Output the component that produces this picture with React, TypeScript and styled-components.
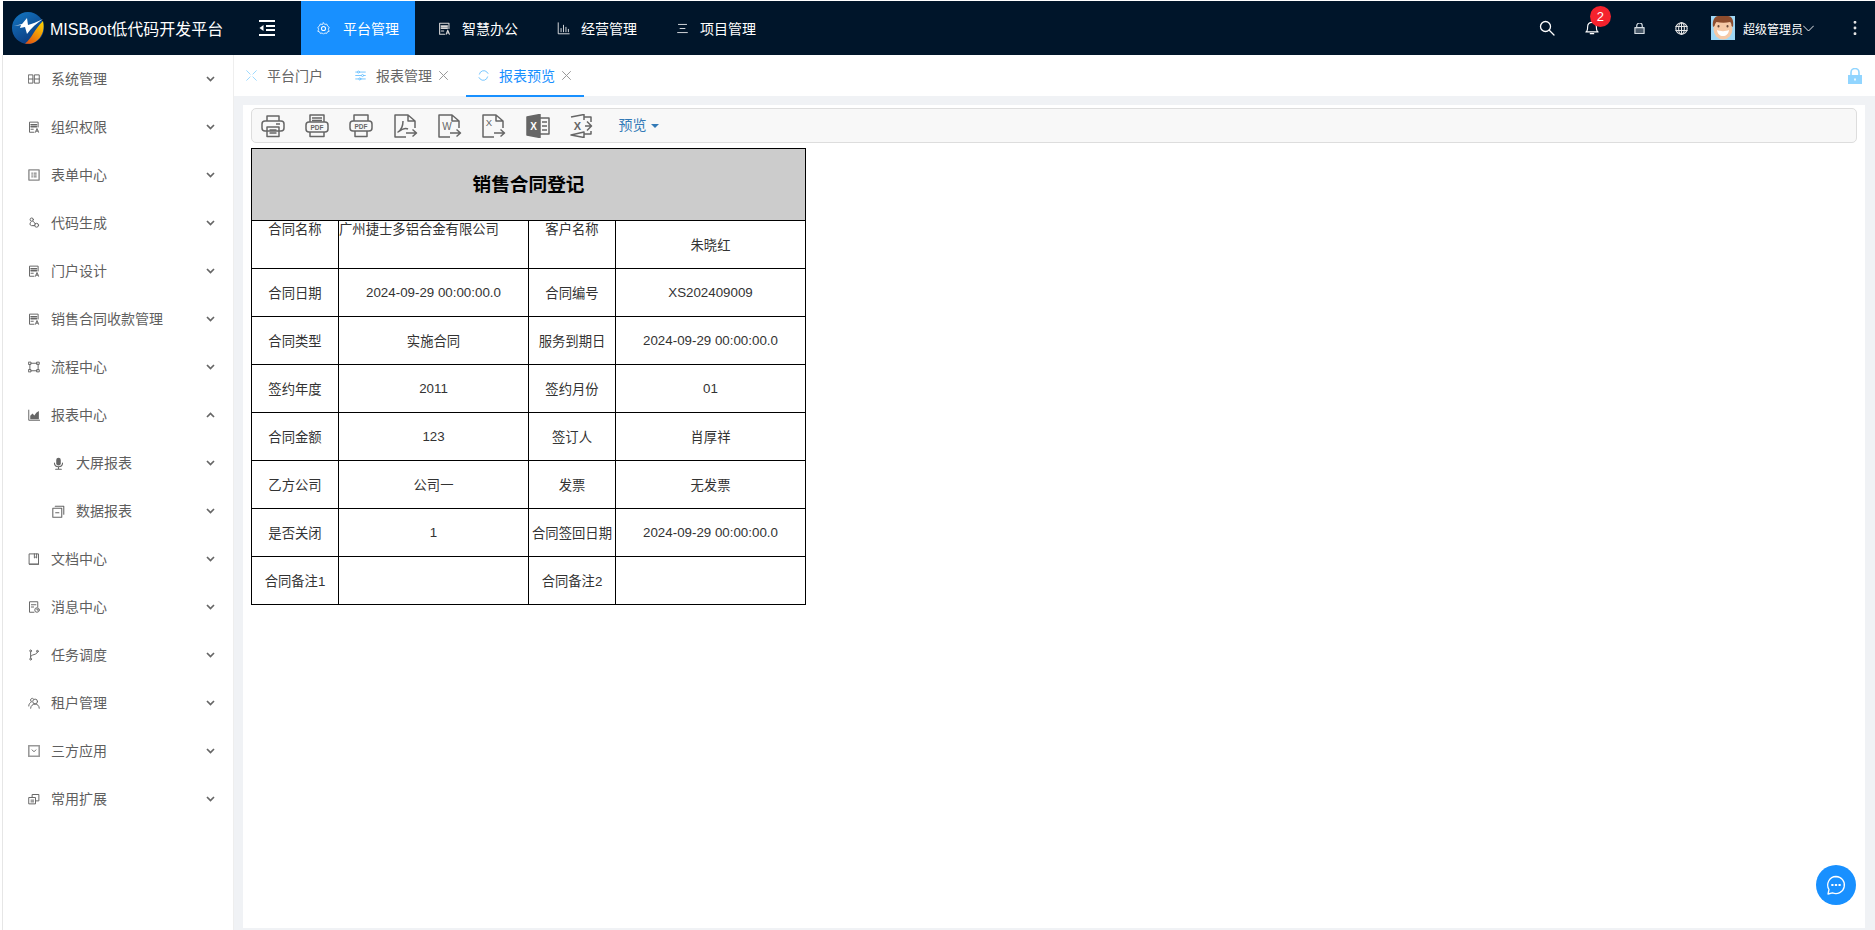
import type { ReactNode } from "react";
import styled, { createGlobalStyle } from "styled-components";

const FONT = `"Liberation Sans", "Noto Sans CJK SC", Arial, sans-serif`;

const GlobalStyle = createGlobalStyle`
  html, body {
    margin: 0;
    padding: 0;
    height: 100%;
    background: #fff;
    overflow: hidden;
  }
  * {
    box-sizing: border-box;
  }
  body {
    font-family: ${FONT};
  }
`;

const Page = styled.div`
  height: 930px;
  padding: 1px 0 0 2px;
  display: flex;
  flex-direction: column;
`;

const Header = styled.header`
  height: 54px;
  margin-left: 1px;
  flex-shrink: 0;
  background: #00152a;
  color: #fff;
  display: flex;
  align-items: center;
`;

const Brand = styled.div`
  display: flex;
  align-items: center;
  width: 255px;
  padding-left: 9px;
  font-size: 16px;
  gap: 6px;
  white-space: nowrap;
`;

const Toggle = styled.div`
  width: 43px;
  display: flex;
  align-items: center;
`;

const Nav = styled.nav`
  display: flex;
  height: 100%;
  gap: 5px;
`;

const NavItem = styled.a<{ $active?: boolean }>`
  width: 114px;
  padding-left: 16px;
  margin-right: ${(p) => (p.$active ? "2px" : "0")};
  display: flex;
  align-items: center;
  gap: ${(p) => (p.$active ? "13px" : "11px")};
  font-size: 14px;
  color: #fff;
  background: ${(p) => (p.$active ? "#1890ff" : "transparent")};
`;

const HeaderRight = styled.div`
  margin-left: auto;
  padding-right: 5px;
  height: 100%;
  display: flex;
  align-items: center;
  position: relative;
`;

const HeaderIcon = styled.span<{ $w: number }>`
  width: ${(p) => p.$w}px;
  display: flex;
  position: relative;
`;

const Badge = styled.span`
  position: absolute;
  left: 5px;
  top: -15px;
  width: 21px;
  height: 21px;
  border-radius: 50%;
  background: #f5222d;
  color: #fff;
  font-size: 13px;
  display: flex;
  align-items: center;
  justify-content: center;
`;

const UserName = styled.span`
  font-size: 12px;
  margin-left: 8px;
  white-space: nowrap;
`;

const Body = styled.div`
  flex: 1;
  min-height: 0;
  display: flex;
  border-left: 1px solid #e6e6e6;
`;

const Sidebar = styled.aside`
  width: 231px;
  flex-shrink: 0;
  background: #fff;
  border-right: 1px solid #eeeeee;
`;

const MenuRow = styled.div<{ $sub?: boolean }>`
  height: 48px;
  display: flex;
  align-items: center;
  padding-left: ${(p) => (p.$sub ? "49px" : "25px")};
  padding-right: 18px;
  font-size: 14px;
  color: #5f5f5f;
  gap: 11px;
`;

const MenuLabel = styled.span`
  flex: 1;
  padding-bottom: 2px;
`;

const Main = styled.main`
  flex: 1;
  min-width: 0;
  display: flex;
  flex-direction: column;
  background: #f0f2f5;
`;

const TabBar = styled.div`
  height: 41px;
  flex-shrink: 0;
  background: #fff;
  display: flex;
  gap: 5px;
`;

const Tab = styled.div<{ $active?: boolean }>`
  height: 42px;
  padding: 0 12px;
  display: flex;
  align-items: center;
  gap: 10px;
  font-size: 14px;
  color: ${(p) => (p.$active ? "#1890ff" : "#666")};
  border-bottom: 2px solid ${(p) => (p.$active ? "#1890ff" : "transparent")};
  position: relative;
  &:first-child {
    margin-right: 3px;
  }
`;

const TabClose = styled.span`
  margin-left: -4px;
  display: flex;
`;

const TabLock = styled.div`
  margin-left: auto;
  padding-right: 12px;
  display: flex;
  align-items: center;
`;

const Panel = styled.section`
  flex: 1;
  min-height: 0;
  margin: 9px 10px 2px 9px;
  padding: 3px 8px;
  background: #fff;
`;

const Toolbar = styled.div`
  height: 35px;
  border: 1px solid #dddddd;
  border-radius: 5px;
  background: #f8f8f8;
  display: flex;
  align-items: center;
  padding-left: 9px;
  gap: 20.2px;
`;

const PreviewMenu = styled.span`
  margin-left: 4px;
  padding-bottom: 3px;
  color: #337ab7;
  font-size: 14px;
  display: flex;
  align-items: center;
  gap: 4px;
`;

const Caret = styled.i`
  width: 0;
  height: 0;
  margin-top: 3px;
  border-left: 4px solid transparent;
  border-right: 4px solid transparent;
  border-top: 4px solid #337ab7;
`;

const ReportTable = styled.table`
  margin-top: 5px;
  width: 554px;
  table-layout: fixed;
  border-collapse: collapse;
  font-size: 13.33px;
  color: #333;
`;

const TitleCell = styled.td`
  height: 72px;
  padding-bottom: 5px;
  border: 1px solid #000;
  background: #cccccc;
  text-align: center;
  font-size: 18.67px;
  font-weight: bold;
  color: #000;
`;

const Cell = styled.td<{ $top?: boolean; $left?: boolean }>`
  height: 48px;
  border: 1px solid #000;
  padding: 0;
  line-height: ${(p) => (p.$top ? "18px" : "normal")};
  text-align: ${(p) => (p.$left ? "left" : "center")};
  vertical-align: ${(p) => (p.$top ? "top" : "middle")};
  white-space: nowrap;
  overflow: hidden;
`;

const ChatButton = styled.div`
  position: fixed;
  left: 1816px;
  top: 865px;
  width: 40px;
  height: 40px;
  border-radius: 50%;
  background: #1890ff;
  display: flex;
  align-items: center;
  justify-content: center;
`;

const Svg = styled.svg<{ $color?: string }>`
  display: block;
  flex-shrink: 0;
  color: ${(p) => p.$color ?? "#666"};
`;

function Icon({ size = 13, color, children, box = 16 }: { size?: number; color?: string; children: ReactNode; box?: number }) {
  return (
    <Svg
      $color={color}
      width={size}
      height={size}
      viewBox={`0 0 ${box} ${box}`}
      fill="none"
      stroke="currentColor"
      strokeWidth={1.3}
      strokeLinecap="round"
      strokeLinejoin="round"
    >
      {children}
    </Svg>
  );
}

const docA = (
  <>
    <path d="M8 15H2V1.500h11.500V8" />
    <path d="M4 5h7.500M4 7.500h7.500" strokeWidth={2} />
    <path d="M4 11h3M10 15l2-5 2 5M10.800 13.500h2.600" />
  </>
);

const menuIcons: Record<string, ReactNode> = {
  bento: (
    <>
      <rect x="1" y="2.500" width="5.500" height="11" />
      <rect x="9" y="2.500" width="6" height="11" />
      <path d="M1 8h5.500M9 8h6" />
    </>
  ),
  docA,
  form: (
    <>
      <rect x="1.200" y="1.200" width="13.600" height="13.600" strokeWidth={1.800} stroke="#888" />
      <path d="M5 5.500h1M8 5.500h3M5 8h1M8 8h3M5 10.500h1M8 10.500h3" />
    </>
  ),
  link: (
    <>
      <circle cx="5" cy="3.500" r="2.200" />
      <path d="M6.500 5.500 9 8M4 6.500C2 8 2 11 4.500 11.500H7" />
      <circle cx="11.500" cy="11" r="2.600" />
      <path d="M9 9h1M7 11.500h2" />
    </>
  ),
  flow: (
    <>
      <rect x="1" y="1.500" width="3" height="3" />
      <rect x="12" y="1.500" width="3" height="3" />
      <rect x="1" y="11.500" width="3" height="3" />
      <rect x="12" y="11.500" width="3" height="3" />
      <path d="M4 3h8M4 13h8M2.500 4.500v7M13.500 4.500v7" />
    </>
  ),
  chart: (
    <>
      <path d="M1 1.500V15h14.500" />
      <path d="M3 13.500V9l3-3 2.500 2.500L11 5l3.500-2.500v11z" fill="currentColor" stroke="none" />
    </>
  ),
  mic: (
    <>
      <rect x="5.200" y="1" width="5.600" height="9.500" rx="2.800" fill="currentColor" stroke="none" />
      <path d="M3 7.500c0 6 10 6 10 0M8 13v2M4.500 15h7" />
    </>
  ),
  copy: (
    <>
      <rect x="1" y="4" width="11" height="11" />
      <path d="M4 1.500h10.500v10M4.500 9.500h4" />
    </>
  ),
  book: (
    <>
      <path d="M2 1.200h12v13.600H2z" />
      <path d="M8.500 1.200v5.500l1.500-1.200 1.500 1.200V1.200" />
      <path d="M2 15h12" strokeWidth={1.600} />
    </>
  ),
  msg: (
    <>
      <path d="M8 15H2V1h11v7" />
      <path d="M4.500 5h6M4.500 8h3" />
      <circle cx="12" cy="12" r="3" />
      <path d="M12 10.500V12h1" />
    </>
  ),
  branch: (
    <>
      <circle cx="3.500" cy="2.500" r="1.200" />
      <circle cx="3.500" cy="13.500" r="1.200" />
      <circle cx="12.500" cy="3" r="1.200" />
      <path d="M3.500 4v8M3.500 10c0-3 9-2 9-5.500" />
    </>
  ),
  users: (
    <>
      <circle cx="9.500" cy="6" r="3.200" />
      <path d="M3.500 15c0-3.500 3-5.500 6-5.500s5.500 2 5.500 5.500" />
      <path d="M7 2.200C5.500 1 3.500 2 3.500 4c0 1.200.5 2 1.300 2.500C2.500 7.500 1 9.500 1 12" />
    </>
  ),
  select: (
    <>
      <rect x="1" y="1" width="14" height="14" strokeWidth={2.200} stroke="#999" />
      <path d="M5.500 6.500 8 9l2.500-2.500" />
    </>
  ),
  expand: (
    <>
      <rect x="1.500" y="6" width="8.500" height="8.500" />
      <path d="M5.500 6V2h9v8.500H10M4 9.500h3.500M4 11.800h3.500" />
    </>
  ),
};

const Chevron = ({ up }: { up?: boolean }) => (
  <Svg width="9" height="6" viewBox="0 0 9 6" fill="none" stroke="#666" strokeWidth={1.700}>
    <path d={up ? "M1 5l3.500-3.500L8 5" : "M1 1l3.500 3.500L8 1"} />
  </Svg>
);

const menu: { label: string; icon: string; sub?: boolean; open?: boolean }[] = [
  { label: "系统管理", icon: "bento" },
  { label: "组织权限", icon: "docA" },
  { label: "表单中心", icon: "form" },
  { label: "代码生成", icon: "link" },
  { label: "门户设计", icon: "docA" },
  { label: "销售合同收款管理", icon: "docA" },
  { label: "流程中心", icon: "flow" },
  { label: "报表中心", icon: "chart", open: true },
  { label: "大屏报表", icon: "mic", sub: true },
  { label: "数据报表", icon: "copy", sub: true },
  { label: "文档中心", icon: "book" },
  { label: "消息中心", icon: "msg" },
  { label: "任务调度", icon: "branch" },
  { label: "租户管理", icon: "users" },
  { label: "三方应用", icon: "select" },
  { label: "常用扩展", icon: "expand" },
];

const Logo = () => (
  <svg width="32" height="32" viewBox="0 0 32 32">
    <defs>
      <linearGradient id="logoBlue" x1="0" y1="0" x2="0.6" y2="1">
        <stop offset="0" stopColor="#1378c4" />
        <stop offset="1" stopColor="#0c3a7e" />
      </linearGradient>
      <linearGradient id="logoOrange" x1="0.9" y1="0" x2="0.2" y2="1">
        <stop offset="0" stopColor="#ffd500" />
        <stop offset="1" stopColor="#e2560f" />
      </linearGradient>
    </defs>
    <circle cx="16" cy="16" r="16" fill="url(#logoBlue)" />
    <path d="M31 9c2 9-1 18-10 22-3 1-6 1-8 .5 7-5 9-14 18-22.500z" fill="url(#logoOrange)" />
    <path d="M2 14l8-2 5-6 1 7c4-1 9-3 15-6-6 4-12 9-16 15l-2-7-5 1 1-3z" fill="#fff" />
  </svg>
);

const Avatar = () => (
  <svg width="24" height="24" viewBox="0 0 24 24">
    <rect width="24" height="24" fill="#9fd8f6" />
    <ellipse cx="12" cy="13" rx="9.500" ry="10.500" fill="#f6c9a6" />
    <path d="M2 11C1 4 4 0 7 0h10c4 0 6 4 5 11l-1.500-1c0-2-.5-3.500-1.500-4-4 1-9 1-13.500 0C4.500 7 4 8 3.500 10z" fill="#8d4c2d" />
    <path d="M6 14c3 1.500 9 1.500 12 0-.5 4-3 6-6 6s-5.500-2-6-6z" fill="#fff" />
    <rect x="6.500" y="9" width="2" height="2.500" rx="1" fill="#6b4a3a" />
    <rect x="15.500" y="9" width="2" height="2.500" rx="1" fill="#6b4a3a" />
  </svg>
);

const TOOL = "#666";

const ToolIcon = ({ children }: { children: ReactNode }) => (
  <Svg $color={TOOL} width="24" height="24" viewBox="0 0 24 24" fill="none" stroke="currentColor" strokeWidth={1.500} strokeLinejoin="round">
    {children}
  </Svg>
);

const DocShape = () => <path d="M12 23H1V1h13l7 6v7M14 1v6h7" />;

const Arrow = () => <path d="M12 19h10.500M18.500 15.500 22.500 19l-4 3.500" />;

const IconText = styled.text`
  font-family: "Liberation Sans", Arial, sans-serif;
  fill: #666;
  stroke: none;
`;

const toolIcons: ReactNode[] = [
  <>
    <path d="M6 7V2h12v5" />
    <rect x="1" y="7" width="22" height="10" rx="3" />
    <path d="M6 13v9.500h12V13H6zM8.500 16h7M8.500 19h7M15 10h4" />
  </>,
  <>
    <path d="M5 8V1h14v7M7 4h10M7 6.500h10" />
    <rect x="1" y="8" width="22" height="10" rx="3" />
    <path d="M5 18v4.500h14V18" />
    <IconText x="12" y="15.500" fontSize="6.500" fontWeight="bold" textAnchor="middle">PDF</IconText>
  </>,
  <>
    <path d="M5 7V1h14v6" />
    <rect x="1" y="7" width="22" height="10" rx="3" />
    <path d="M6 17v5.500h12V17" />
    <IconText x="12" y="14.500" fontSize="6.500" fontWeight="bold" textAnchor="middle">PDF</IconText>
  </>,
  <>
    <DocShape />
    <path d="M9 7c0 5-2 9-5 11 4-3 8-4 10-3" />
    <Arrow />
  </>,
  <>
    <DocShape />
    <IconText x="9" y="16" fontSize="10" textAnchor="middle">W</IconText>
    <Arrow />
  </>,
  <>
    <DocShape />
    <IconText x="7" y="12" fontSize="9.500" textAnchor="middle">X</IconText>
    <Arrow />
  </>,
  <>
    <path d="M1 3l13-2.500v23L1 21z" fill="#666" />
    <path d="M14 4h9v16h-9M16 8h5M16 12h5M16 16h5" />
    <text x="7.500" y="15.500" fontSize="10" fontWeight="bold" textAnchor="middle" fill="#fff" stroke="none" fontFamily="Liberation Sans">X</text>
  </>,
  <>
    <path d="M1 3l13-2.500V6M14 18v5.500L1 21zM14 3h7v5M21 17v3h-7" />
    <IconText x="7.500" y="16" fontSize="11" fontWeight="bold" textAnchor="middle">X</IconText>
    <path d="M17 7.500l4.500 4.500-4.500 4.500M15 12h6" />
  </>,
];

const rows: [string, string, string, string][] = [
  ["合同日期", "2024-09-29 00:00:00.0", "合同编号", "XS202409009"],
  ["合同类型", "实施合同", "服务到期日", "2024-09-29 00:00:00.0"],
  ["签约年度", "2011", "签约月份", "01"],
  ["合同金额", "123", "签订人", "肖厚祥"],
  ["乙方公司", "公司一", "发票", "无发票"],
  ["是否关闭", "1", "合同签回日期", "2024-09-29 00:00:00.0"],
  ["合同备注1", "", "合同备注2", ""],
];

function App() {
  return (
    <Page>
      <GlobalStyle />
      <Header>
        <Brand>
          <Logo />
          MISBoot低代码开发平台
        </Brand>
        <Toggle>
          <Icon size={18} color="#fff" box={18}>
            <path d="M1 2h16M8 7h9M8 11h9M1 16h16" strokeWidth={1.800} strokeLinecap="butt" />
            <path d="M5.500 6 1.500 9l4 3z" fill="#fff" stroke="none" />
          </Icon>
        </Toggle>
        <Nav>
          <NavItem $active>
            <Icon size={13} color="#fff">
              <path d="M8 1l1.500 2 2.500-.5 1 2.500 2 1.500-1 2.500 1 2.500-2 .5-1 2-2.500-.5L8 15l-1.500-1.500-2.500.5-1-2-2-.5 1-2.500-1-2.500 2-1.500 1-2.500 2.500.5z" strokeWidth={1} />
              <circle cx="8" cy="8" r="2.500" />
            </Icon>
            平台管理
          </NavItem>
          <NavItem>
            <Icon size={13} color="#d8d8d8">{docA}</Icon>
            智慧办公
          </NavItem>
          <NavItem>
            <Icon size={13} color="#fff">
              <path d="M1.500 1v13.500H15M5 12V8M8 12V4M11 12V6.500M14 12V9" strokeWidth={1} />
            </Icon>
            经营管理
          </NavItem>
          <NavItem>
            <Icon size={13} color="#fff">
              <path d="M3 3h10M5 8h6M2 13h12" strokeWidth={1} />
            </Icon>
            项目管理
          </NavItem>
        </Nav>
        <HeaderRight>
          <HeaderIcon $w={46}>
            <Icon size={16} color="#fff">
              <circle cx="6.500" cy="6.500" r="5" />
              <path d="M10.500 10.500 15 15" />
            </Icon>
          </HeaderIcon>
          <HeaderIcon $w={49}>
            <Icon size={14} color="#fff">
              <path d="M1 12.500c2-1 2-3 2-6C3 3.500 5 1.500 8 1.500s5 2 5 5c0 3 0 5 2 6zM6 14.500h4" />
            </Icon>
            <Badge>2</Badge>
          </HeaderIcon>
          <HeaderIcon $w={41}>
            <Icon size={11} color="#d5dce2" box={12}>
              <rect x="1" y="5" width="10" height="6.500" fill="#d5dce2" fillOpacity={0.35} />
              <path d="M3 5V3a3 3 0 0 1 6 0v2" />
            </Icon>
          </HeaderIcon>
          <HeaderIcon $w={36}>
            <Icon size={13} color="#e6e6e6">
              <circle cx="8" cy="8" r="7" />
              <ellipse cx="8" cy="8" rx="3.500" ry="7" />
              <path d="M1 5.500h14M1 10.500h14M8 1v14" />
            </Icon>
          </HeaderIcon>
          <Avatar />
          <UserName>超级管理员</UserName>
          <HeaderIcon $w={45}>
            <Icon size={11} color="#fff" box={11}>
              <path d="M.5 3l5 5 5-5" strokeWidth={0.900} />
            </Icon>
          </HeaderIcon>
          <HeaderIcon $w={22}>
            <Icon size={14} color="#e6e6e6">
              <circle cx="8" cy="1.500" r="1" fill="#e6e6e6" />
              <circle cx="8" cy="8" r="1" fill="#e6e6e6" />
              <circle cx="8" cy="14.500" r="1" fill="#e6e6e6" />
            </Icon>
          </HeaderIcon>
        </HeaderRight>
      </Header>
      <Body>
        <Sidebar>
          {menu.map((m) => (
            <MenuRow key={m.label} $sub={m.sub}>
              <Icon size={m.sub ? 13 : 12}>{menuIcons[m.icon]}</Icon>
              <MenuLabel>{m.label}</MenuLabel>
              <Chevron up={m.open} />
            </MenuRow>
          ))}
        </Sidebar>
        <Main>
          <TabBar>
            <Tab>
              <Icon size={11} color="#91d5ff">
                <path d="M1 1l5 5M15 1l-5 5M1 15l5-5M15 15l-5-5" />
              </Icon>
              平台门户
            </Tab>
            <Tab>
              <Icon size={11} color="#69c0ff">
                <path d="M1 3h14M1 8h14M1 13h14" />
                <circle cx="5" cy="3" r="1.500" fill="#fff" />
                <circle cx="11" cy="8" r="1.500" fill="#fff" />
                <circle cx="7" cy="13" r="1.500" fill="#fff" />
              </Icon>
              报表管理
              <TabClose>
                <Icon size={11} color="#999" box={11}>
                  <path d="M1.500 1.500l8 8M9.500 1.500l-8 8" strokeWidth={1} />
                </Icon>
              </TabClose>
            </Tab>
            <Tab $active>
              <Icon size={11} color="#69c0ff">
                <path d="M2 6a6.500 6.500 0 0 1 11-3l1.500 2M14 10a6.500 6.500 0 0 1-11 3l-1.500-2" />
              </Icon>
              报表预览
              <TabClose>
                <Icon size={11} color="#999" box={11}>
                  <path d="M1.500 1.500l8 8M9.500 1.500l-8 8" strokeWidth={1} />
                </Icon>
              </TabClose>
            </Tab>
            <TabLock>
              <Icon size={16} color="#91d5ff" box={16}>
                <rect x="1" y="7" width="14" height="9" fill="#91d5ff" stroke="none" />
                <path d="M4 7V4.500a4 4 0 0 1 8 0V7" strokeWidth={1.600} />
                <rect x="7.200" y="10.500" width="1.600" height="2" fill="#fff" stroke="none" />
              </Icon>
            </TabLock>
          </TabBar>
          <Panel>
            <Toolbar>
              {toolIcons.map((icon, i) => (
                <ToolIcon key={i}>{icon}</ToolIcon>
              ))}
              <PreviewMenu>
                预览
                <Caret />
              </PreviewMenu>
            </Toolbar>
            <ReportTable>
              <colgroup>
                <col width="87" />
                <col width="190" />
                <col width="87" />
                <col width="190" />
              </colgroup>
              <tbody>
                <tr>
                  <TitleCell colSpan={4}>销售合同登记</TitleCell>
                </tr>
                <tr>
                  <Cell $top>合同名称</Cell>
                  <Cell $top $left>广州捷士多铝合金有限公司</Cell>
                  <Cell $top>客户名称</Cell>
                  <Cell>朱晓红</Cell>
                </tr>
                {rows.map((r) => (
                  <tr key={r[0]}>
                    {r.map((text, i) => (
                      <Cell key={i}>{text}</Cell>
                    ))}
                  </tr>
                ))}
              </tbody>
            </ReportTable>
          </Panel>
        </Main>
      </Body>
      <ChatButton>
        <Icon size={22} color="#fff" box={22}>
          <path d="M11 2.500a8.500 8.500 0 1 1-3.500 16.300L3 20l1-4.500A8.500 8.500 0 0 1 11 2.500z" />
          <path d="M7 11h.8M10.600 11h.8M14.200 11h.8" strokeWidth={1.800} />
        </Icon>
      </ChatButton>
    </Page>
  );
}

export default App;
